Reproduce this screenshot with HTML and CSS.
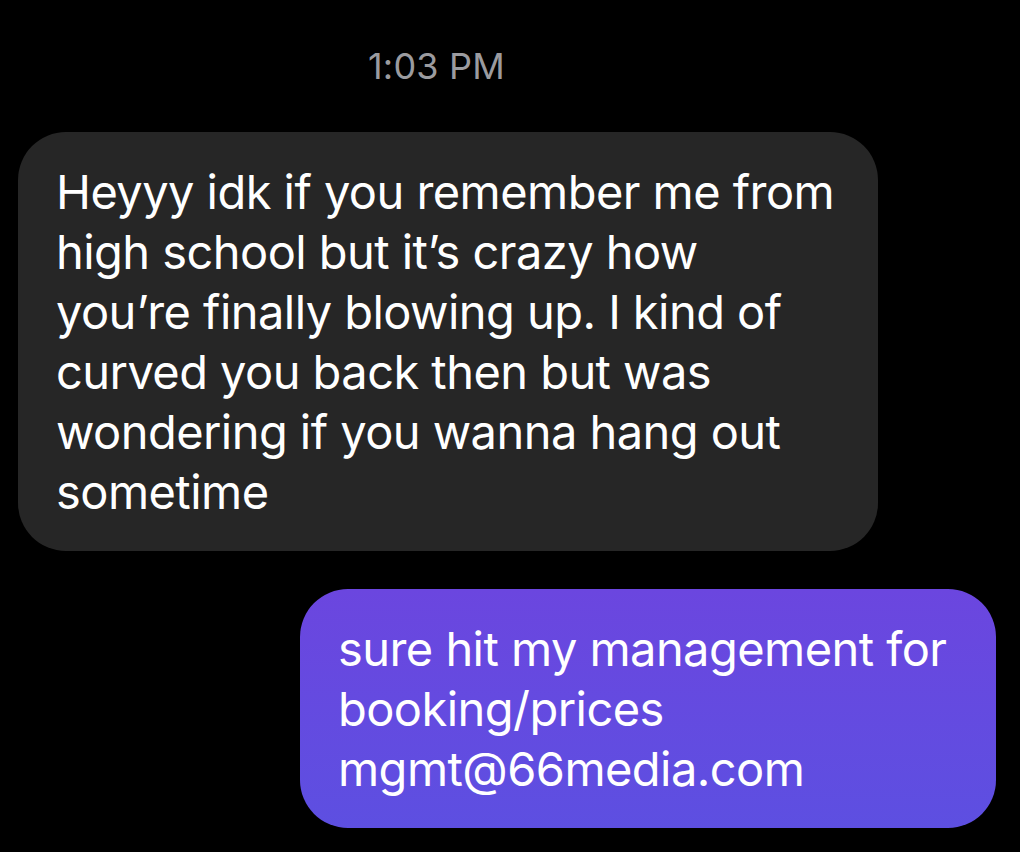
FILE: index.html
```html
<!DOCTYPE html>
<html lang="en">
<head>
<meta charset="utf-8">
<title>Messages</title>
<link rel="stylesheet" href="styles.css">
</head>
<body>
<main class="thread">
  <div class="timestamp">1:03 PM</div>
  <div class="row row-in">
    <p class="bubble bubble-in">Heyyy idk if you remember me from<br>high school but it’s crazy how<br>you’re finally blowing up. I kind of<br>curved you back then but was<br>wondering if you wanna hang out<br>sometime</p>
  </div>
  <div class="row row-out">
    <p class="bubble bubble-out">sure hit my management for<br>booking/prices<br>mgmt@66media.com</p>
  </div>
</main>
</body>
</html>
```
FILE: styles.css
```css
html, body {
  margin: 0;
  padding: 0;
  background: #000;
  height: 100%;
  overflow: hidden;
}
body {
  font-family: Inter, "Noto Sans", sans-serif;
  color: #fff;
}
.thread {
  display: flex;
  flex-direction: column;
  padding: 46px 24px 0 18px;
}
.timestamp {
  padding-left: 350px;
  font-size: 36px;
  line-height: 40px;
  letter-spacing: 0.2px;
  color: #9b9b9f;
}
.row {
  display: flex;
}
.row-in {
  margin-top: 46px;
}
.row-out {
  margin-top: 38px;
  justify-content: flex-end;
}
.bubble {
  margin: 0;
  font-size: 47px;
  line-height: 60px;
  letter-spacing: -0.55px;
  border-radius: 48px;
  box-sizing: border-box;
  white-space: nowrap;
}
.bubble-in {
  width: 860px;
  background: #262626;
  padding: 30px 20px 29px 38px;
}
.bubble-out {
  width: 696px;
  background: linear-gradient(180deg, #6b46df 0%, #5d4fe1 100%);
  padding: 30px 20px 29px 38px;
}
```
